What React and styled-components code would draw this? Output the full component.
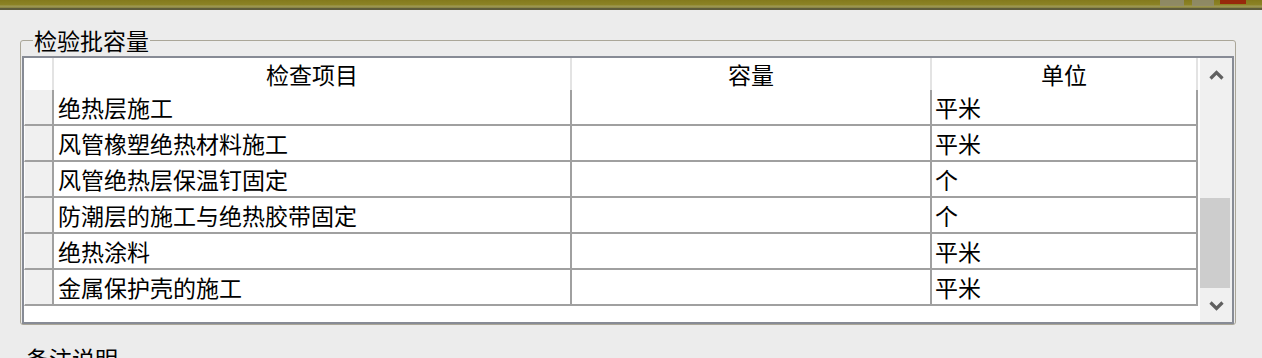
import React from 'react';
import styled, { createGlobalStyle } from 'styled-components';

const GlobalStyle = createGlobalStyle`
    html, body {
        margin: 0;
        padding: 0;
        background: #ececec;
        overflow: hidden;
    }
    body {
        font-family: "Noto Sans CJK SC", "Noto Sans", sans-serif;
        color: #000;
    }
`;

const TitleBar = styled.div`
    height: 8px;
    display: flex;
    justify-content: flex-end;
    align-items: flex-start;
    padding-right: 16px;
    background: linear-gradient(#847a1c 0, #8c8326 5px, #a29c58 6px, #85803f 8px);
    border-bottom: 2px solid #5e5c3c;
`;

const BarBlob = styled.div`
    width: ${p => p.w}px;
    height: ${p => p.h}px;
    margin-left: ${p => p.gap}px;
    background: ${p => p.color};
    opacity: .85;
`;

const GroupBox = styled.fieldset`
    margin: 18px 26px 0 20px;
    padding: 0 1px 0 1px;
    min-width: 0;
    border: 1px solid #aaa698;
    border-radius: 3px;
`;

const GroupTitle = styled.legend`
    margin-left: 11px;
    padding: 0 1px;
    font-size: 23px;
    line-height: 24px;
`;

const Grid = styled.div`
    box-sizing: border-box;
    height: 268px;
    margin-top: 4px;
    display: flex;
    background: #fff;
    border: 2px solid #878b95;
`;

const Table = styled.div`
    flex: 1;
    display: grid;
    grid-template-columns: 30px 518px 360px 266px;
    grid-auto-rows: 36px;
    grid-template-rows: 32px;
    align-content: start;
`;

const HeadCell = styled.div`
    box-sizing: border-box;
    display: flex;
    align-items: center;
    justify-content: center;
    border-right: 2px solid #e3e3e3;
    font-size: 23px;
    line-height: 24px;
    white-space: nowrap;
`;

const RowHead = styled.div`
    box-sizing: border-box;
    background: #f0f0f0;
    border-left: 1px solid #fff;
    border-right: 2px solid #a0a0a0;
    border-bottom: 2px solid #a0a0a0;
`;

const Cell = styled.div`
    box-sizing: border-box;
    display: flex;
    align-items: center;
    padding-left: ${p => p.pad || 4}px;
    border-right: 2px solid #a0a0a0;
    border-bottom: 2px solid #a0a0a0;
    font-size: 23px;
    line-height: 24px;
    white-space: nowrap;
    overflow: hidden;
`;

const ScrollBar = styled.div`
    width: 32px;
    display: flex;
    flex-direction: column;
    background: #f0f0f0;
`;

const ArrowButton = styled.div`
    height: 32px;
    display: flex;
    align-items: center;
    justify-content: center;
    padding-top: ${p => p.shift || 0}px;
    box-sizing: border-box;
`;

const Track = styled.div`
    flex: 1;
    display: flex;
    flex-direction: column;
`;

const Thumb = styled.div`
    height: ${p => p.size}px;
    margin: ${p => p.offset}px 2px 0 0;
    background: #cdcdcd;
`;

const NoteLabel = styled.div`
    margin: 21px 0 0 26px;
    font-size: 23px;
    line-height: 24px;
`;

const Chevron = ({ up }) => (
    <svg width="15" height="10" viewBox="0 0 15 10">
        <polyline
            points={up ? '1.5,8.5 7.5,2.5 13.5,8.5' : '1.5,1.5 7.5,7.5 13.5,1.5'}
            fill="none"
            stroke="#606060"
            strokeWidth="3.2"
        />
    </svg>
);

const rows = [
    { item: '绝热层施工', amount: '', unit: '平米' },
    { item: '风管橡塑绝热材料施工', amount: '', unit: '平米' },
    { item: '风管绝热层保温钉固定', amount: '', unit: '个' },
    { item: '防潮层的施工与绝热胶带固定', amount: '', unit: '个' },
    { item: '绝热涂料', amount: '', unit: '平米' },
    { item: '金属保护壳的施工', amount: '', unit: '平米' },
];

export default function App() {
    return (
        <>
            <GlobalStyle />
            <TitleBar>
                <BarBlob w={24} h={6} gap={0} color="#8f8c70" />
                <BarBlob w={22} h={6} gap={8} color="#8f8c70" />
                <BarBlob w={26} h={4} gap={6} color="#9a1a08" />
            </TitleBar>
            <GroupBox>
                <GroupTitle>检验批容量</GroupTitle>
                <Grid>
                    <Table>
                        <HeadCell />
                        <HeadCell>检查项目</HeadCell>
                        <HeadCell>容量</HeadCell>
                        <HeadCell>单位</HeadCell>
                        {rows.map((row, i) => (
                            <React.Fragment key={i}>
                                <RowHead />
                                <Cell>{row.item}</Cell>
                                <Cell>{row.amount}</Cell>
                                <Cell pad={3}>{row.unit}</Cell>
                            </React.Fragment>
                        ))}
                    </Table>
                    <ScrollBar>
                        <ArrowButton shift={2}><Chevron up /></ArrowButton>
                        <Track>
                            <Thumb offset={108} size={90} />
                        </Track>
                        <ArrowButton><Chevron /></ArrowButton>
                    </ScrollBar>
                </Grid>
            </GroupBox>
            <NoteLabel>备注说明</NoteLabel>
        </>
    );
}
